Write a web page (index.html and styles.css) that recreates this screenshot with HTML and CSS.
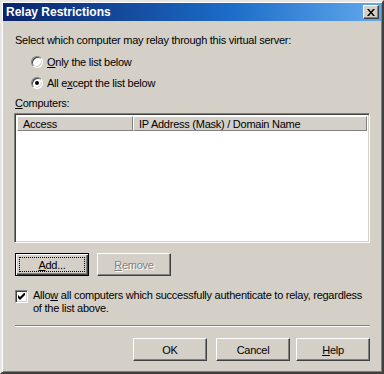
FILE: index.html
```html
<!DOCTYPE html>
<html lang="en">
<head>
    <meta charset="UTF-8">
    <title>Relay Restrictions</title>
    <link rel="stylesheet" href="styles.css">
</head>
<body>
    <div class="window">
        <div class="titlebar">
            <span class="title">Relay Restrictions</span>
            <span class="close-btn">
                <svg width="8" height="7" viewBox="0 0 8 7"><path d="M0 0h2l2 2.5L6 0h2L5 3.5 8 7H6L4 4.5 2 7H0l3-3.5z" fill="#000"/></svg>
            </span>
        </div>
        <div class="dialog-body">
            <p class="intro">Select which computer may relay through this virtual server:</p>
            <div class="radio-group">
                <label class="radio-row"><span class="radio"></span><span><u>O</u>nly the list below</span></label>
                <label class="radio-row"><span class="radio checked"><span class="dot"></span></span><span>All e<u>x</u>cept the list below</span></label>
            </div>
            <p class="list-label"><u>C</u>omputers:</p>
            <div class="listbox">
                <div class="list-header">
                    <span class="col col-access">Access</span>
                    <span class="col col-ip">IP Address (Mask) / Domain Name</span>
                </div>
            </div>
            <div class="list-buttons">
                <button class="btn default"><span class="focus"><u>A</u>dd...</span></button>
                <button class="btn disabled"><u>R</u>emove</button>
            </div>
            <div class="check-row">
                <span class="checkbox">
                    <svg width="7" height="7" viewBox="0 0 7 7"><path d="M0 2v3l2 2 5-5V-1L2 4z" fill="#000"/></svg>
                </span>
                <span class="check-text">Allo<u>w</u> all computers which successfully authenticate to relay, regardless of the list above.</span>
            </div>
            <div class="separator"></div>
            <div class="footer">
                <button class="btn">OK</button>
                <button class="btn btn-cancel">Cancel</button>
                <button class="btn btn-help"><u>H</u>elp</button>
            </div>
        </div>
    </div>
</body>
</html>
```

FILE: styles.css
```css
* {
    margin: 0;
    padding: 0;
    box-sizing: border-box;
}
body {
    font-family: 'Liberation Sans', Arial, sans-serif;
    font-size: 11px;
    letter-spacing: -0.25px;
    color: #000;
    background-color: #d4d0c8;
}
u {
    text-decoration: underline;
    text-underline-offset: 1px;
}
.window {
    width: 384px;
    height: 374px;
    background-color: #d4d0c8;
    border: 2px solid;
    border-color: #e8e6e2 #404040 #404040 #e8e6e2;
    box-shadow: inset 1px 1px 0 #fff, inset -1px -1px 0 #808080;
    padding: 1px;
}
.titlebar {
    height: 18px;
    display: flex;
    align-items: center;
    justify-content: space-between;
    padding: 0 2px 0 3px;
    background: linear-gradient(to right, #0a246a, #1c6cc8 60%, #62a8ec);
}
.title {
    color: #fff;
    font-weight: bold;
    font-size: 12px;
    letter-spacing: 0;
}
.close-btn {
    width: 16px;
    height: 14px;
    display: flex;
    align-items: center;
    justify-content: center;
    background-color: #d4d0c8;
    border: 1px solid;
    border-color: #fff #404040 #404040 #fff;
    box-shadow: inset -1px -1px 0 #808080;
}
.dialog-body {
    padding: 0 11px;
}
.intro {
    margin-top: 13px;
    margin-left: 1px;
    line-height: 13px;
}
.radio-group {
    margin-top: 8px;
    padding-left: 17px;
    display: flex;
    flex-direction: column;
    gap: 8px;
}
.radio-row {
    display: flex;
    align-items: center;
    height: 13px;
    gap: 4px;
}
.radio {
    width: 12px;
    height: 12px;
    border-radius: 50%;
    background-color: #fff;
    border: 1px solid;
    border-color: #808080 #fff #fff #808080;
    box-shadow: inset 1px 1px 0 #404040, inset -1px -1px 0 #d4d0c8;
    display: flex;
    align-items: center;
    justify-content: center;
}
.dot {
    width: 4px;
    height: 4px;
    border-radius: 50%;
    background-color: #000;
}
.list-label {
    margin-top: 8px;
    margin-left: 1px;
    line-height: 13px;
}
.listbox {
    margin-top: 3px;
    height: 130px;
    background-color: #fff;
    border: 1px solid;
    border-color: #808080 #fff #fff #808080;
    box-shadow: inset 1px 1px 0 #404040, inset -1px -1px 0 #d4d0c8;
    padding: 2px;
}
.list-header {
    display: flex;
    height: 15px;
}
.col {
    display: flex;
    align-items: center;
    background-color: #d4d0c8;
    border: 1px solid;
    border-color: #fff #808080 #808080 #fff;
    padding-left: 5px;
}
.col-access {
    width: 116px;
}
.col-ip {
    flex: 1;
}
.list-buttons {
    margin-top: 10px;
    display: flex;
    gap: 8px;
    padding-left: 1px;
}
.btn {
    width: 74px;
    height: 23px;
    font-family: inherit;
    font-size: 11px;
    letter-spacing: inherit;
    color: #000;
    background-color: #d4d0c8;
    border: 1px solid;
    border-color: #fff #404040 #404040 #fff;
    box-shadow: inset -1px -1px 0 #808080;
    display: flex;
    align-items: center;
    justify-content: center;
}
.btn.default {
    border: 1px solid #000;
    box-shadow: inset 1px 1px 0 #fff, inset -1px -1px 0 #404040, inset -2px -2px 0 #808080;
    padding: 3px;
}
.focus {
    width: 100%;
    height: 100%;
    display: flex;
    align-items: center;
    justify-content: center;
    outline: 1px dotted #000;
    outline-offset: -1px;
}
.btn.disabled {
    color: #808080;
    text-shadow: 1px 1px 0 #fff;
}
.check-row {
    margin-top: 13px;
    display: flex;
    align-items: flex-start;
    gap: 5px;
    padding-left: 1px;
}
.checkbox {
    flex: none;
    width: 13px;
    height: 13px;
    margin-top: 1px;
    background-color: #fff;
    border: 1px solid;
    border-color: #808080 #fff #fff #808080;
    box-shadow: inset 1px 1px 0 #404040, inset -1px -1px 0 #d4d0c8;
    display: flex;
    align-items: center;
    justify-content: center;
}
.check-text {
    line-height: 13px;
}
.separator {
    margin-top: 10px;
    margin-left: 1px;
    height: 2px;
    border-top: 1px solid #808080;
    border-bottom: 1px solid #fff;
}
.footer {
    margin-top: 11px;
    display: flex;
    justify-content: flex-end;
}
.btn-cancel {
    margin-left: 9px;
}
.btn-help {
    margin-left: 6px;
}
```
